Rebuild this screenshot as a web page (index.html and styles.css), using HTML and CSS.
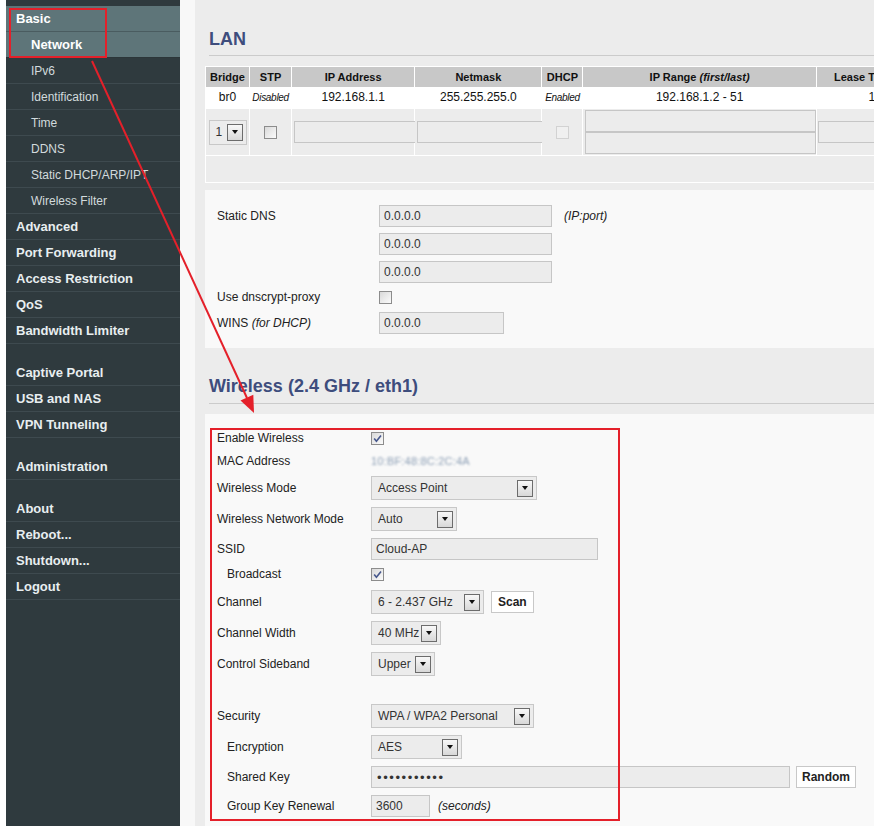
FILE: index.html
```html
<!DOCTYPE html>
<html>
<head>
<meta charset="utf-8">
<title>Basic: Network</title>
<link rel="stylesheet" href="styles.css">
</head>
<body>
<div class="page">
  <div class="edge"></div>
  <nav class="sidebar">
    <a class="item main active">Basic</a>
    <a class="item sub active current">Network</a>
    <a class="item sub">IPv6</a>
    <a class="item sub">Identification</a>
    <a class="item sub">Time</a>
    <a class="item sub">DDNS</a>
    <a class="item sub">Static DHCP/ARP/IPT</a>
    <a class="item sub">Wireless Filter</a>
    <a class="item main">Advanced</a>
    <a class="item main">Port Forwarding</a>
    <a class="item main">Access Restriction</a>
    <a class="item main">QoS</a>
    <a class="item main">Bandwidth Limiter</a>
    <div class="spacer"></div>
    <a class="item main">Captive Portal</a>
    <a class="item main">USB and NAS</a>
    <a class="item main">VPN Tunneling</a>
    <div class="spacer"></div>
    <a class="item main">Administration</a>
    <div class="spacer"></div>
    <a class="item main">About</a>
    <a class="item main">Reboot...</a>
    <a class="item main">Shutdown...</a>
    <a class="item main">Logout</a>
  </nav>
  <div class="gutter"></div>
  <main class="content">
    <h2 class="section-title first">LAN</h2>
    <table class="lan">
      <colgroup>
        <col class="c-bridge"><col class="c-stp"><col class="c-ip"><col class="c-mask"><col class="c-dhcp"><col class="c-range"><col class="c-lease">
      </colgroup>
      <tr class="head">
        <th>Bridge</th><th>STP</th><th>IP Address</th><th>Netmask</th><th>DHCP</th><th>IP Range <i>(first/last)</i></th><th>Lease Time <i>(mins)</i></th>
      </tr>
      <tr class="vals">
        <td>br0</td><td><i class="small">Disabled</i></td><td>192.168.1.1</td><td>255.255.255.0</td><td><i class="small">Enabled</i></td><td>192.168.1.2 - 51</td><td>1440</td>
      </tr>
      <tr class="edit">
        <td class="center"><div class="select w38 h25"><span class="val">1</span><span class="arrow"></span></div></td>
        <td class="center"><span class="check"></span></td>
        <td class="left"><input class="field w123" value=""></td>
        <td class="left"><input class="field w127" value=""></td>
        <td class="center"><span class="check disabled"></span></td>
        <td class="left"><div class="stack"><input class="field w231" value=""><input class="field w231" value=""></div></td>
        <td class="left tight"><input class="field w124" value=""></td>
      </tr>
      <tr class="empty"><td colspan="7"></td></tr>
    </table>

    <div class="box dns">
      <div class="label">Static DNS</div>
      <div class="ctrl"><input class="field w173" value="0.0.0.0"><i class="note">(IP:port)</i></div>
      <div class="label"></div>
      <div class="ctrl"><input class="field w173" value="0.0.0.0"></div>
      <div class="label"></div>
      <div class="ctrl"><input class="field w173" value="0.0.0.0"></div>
      <div class="label">Use dnscrypt-proxy</div>
      <div class="ctrl"><span class="check"></span></div>
      <div class="label">WINS <i>(for DHCP)</i></div>
      <div class="ctrl"><input class="field w125" value="0.0.0.0"></div>
    </div>

    <h2 class="section-title second">Wireless (2.4 GHz / eth1)</h2>
    <div class="box wireless">
      <div class="label">Enable Wireless</div>
      <div class="ctrl"><span class="check"><svg viewBox="0 0 11 11" width="11" height="11"><path d="M2.2 5.6 L4.4 8.2 L9 2.4" fill="none" stroke="#46578c" stroke-width="1.6"/></svg></span></div>

      <div class="label">MAC Address</div>
      <div class="ctrl"><span class="mac">10:BF:48:8C:2C:4A</span></div>

      <div class="label">Wireless Mode</div>
      <div class="ctrl"><div class="select w166"><span class="val">Access Point</span><span class="arrow"></span></div></div>

      <div class="label">Wireless Network Mode</div>
      <div class="ctrl"><div class="select w86"><span class="val">Auto</span><span class="arrow"></span></div></div>

      <div class="label">SSID</div>
      <div class="ctrl"><input class="field w227" value="Cloud-AP"></div>

      <div class="label indent">Broadcast</div>
      <div class="ctrl"><span class="check"><svg viewBox="0 0 11 11" width="11" height="11"><path d="M2.2 5.6 L4.4 8.2 L9 2.4" fill="none" stroke="#46578c" stroke-width="1.6"/></svg></span></div>

      <div class="label">Channel</div>
      <div class="ctrl"><div class="select w113"><span class="val">6 - 2.437 GHz</span><span class="arrow"></span></div><button class="btn scan">Scan</button></div>

      <div class="label">Channel Width</div>
      <div class="ctrl"><div class="select w70"><span class="val">40 MHz</span><span class="arrow"></span></div></div>

      <div class="label">Control Sideband</div>
      <div class="ctrl"><div class="select w64"><span class="val">Upper</span><span class="arrow"></span></div></div>

      <div class="gap-row"></div>

      <div class="label">Security</div>
      <div class="ctrl"><div class="select w163"><span class="val">WPA / WPA2 Personal</span><span class="arrow"></span></div></div>

      <div class="label indent">Encryption</div>
      <div class="ctrl"><div class="select w91"><span class="val">AES</span><span class="arrow"></span></div></div>

      <div class="label indent">Shared Key</div>
      <div class="ctrl"><div class="field pw w419"><span class="dots">•••••••••••</span></div><button class="btn random">Random</button></div>

      <div class="label indent">Group Key Renewal</div>
      <div class="ctrl"><input class="field w59" value="3600"><i class="note near">(seconds)</i></div>
    </div>
  </main>
</div>

<div class="annot annot-nav"></div>
<div class="annot annot-form"></div>
<svg class="annot-arrow" width="874" height="826" viewBox="0 0 874 826">
  <line x1="92" y1="61" x2="247" y2="398" stroke="#e4202a" stroke-width="2"/>
  <polygon points="254,413 240.5,400.5 253.3,394.7" fill="#e4202a"/>
</svg>
</body>
</html>
```

FILE: styles.css
```css
html, body {
  margin: 0;
  padding: 0;
  height: 100%;
  overflow: hidden;
}

body {
  font-family: "Liberation Sans", Arial, sans-serif;
  font-size: 12px;
  color: #222;
  background: #ececec;
  position: relative;
}

.page {
  display: flex;
  height: 826px;
}

.edge {
  width: 6px;
  flex: none;
  background: #ffffff;
}

/* Sidebar */
.sidebar {
  width: 174px;
  flex: none;
  background: #2f3a3e;
  padding-top: 6px;
  display: flex;
  flex-direction: column;
}

.item {
  display: flex;
  align-items: center;
  height: 25px;
  flex: none;
  border-bottom: 1px solid #3e4a4f;
  color: #d2dadd;
  text-decoration: none;
  font-size: 12px;
  white-space: nowrap;
}

.item.main {
  font-weight: bold;
  font-size: 13px;
  padding-left: 10px;
  color: #e8eef0;
}

.item.sub {
  padding-left: 25px;
}

.item.active {
  background: #5e7579;
  border-bottom-color: #4a5c60;
  color: #ffffff;
}

.item.current {
  font-weight: bold;
  font-size: 13px;
  border-bottom-color: #2c3639;
}

.spacer {
  height: 16px;
  flex: none;
}

.gutter {
  width: 15px;
  flex: none;
  background: #f8f8f8;
}

/* Content */
.content {
  flex: 1;
  min-width: 0;
  overflow: hidden;
  padding: 28px 0 0 10px;
}

.section-title {
  margin: 0 0 10px 4px;
  padding-bottom: 6px;
  border-bottom: 1px solid #cbcbcb;
  font-size: 18px;
  line-height: 22px;
  font-weight: bold;
  color: #3e4d7d;
  white-space: nowrap;
}

.section-title.first {
  padding-bottom: 5px;
}

.section-title.second {
  margin-top: 27px;
}

/* LAN table */
.lan {
  border-spacing: 1px;
  background: #ffffff;
  table-layout: fixed;
  width: 743px;
  font-family: "Liberation Sans", Arial, sans-serif;
}

.c-bridge { width: 43px; }
.c-stp { width: 41px; }
.c-ip { width: 122px; }
.c-mask { width: 126px; }
.c-dhcp { width: 40px; }
.c-range { width: 232px; }
.c-lease { width: 130px; }

.lan th {
  background: #c8c8c8;
  height: 19px;
  padding: 0 0 1px;
  font-size: 11px;
  font-weight: bold;
  color: #111;
  text-align: center;
  white-space: nowrap;
  overflow: hidden;
}

.lan .vals td {
  background: #ffffff;
  height: 17px;
  padding: 0 0 3px;
  text-align: center;
  font-size: 12px;
  color: #111;
  white-space: nowrap;
}

.lan .small {
  font-size: 10px;
  letter-spacing: -0.3px;
}

.lan .edit td {
  background: #ececec;
  height: 46px;
  padding: 0;
  vertical-align: middle;
}

.lan .edit td.center {
  text-align: center;
}

.lan .edit td.left {
  text-align: left;
  padding-left: 2px;
}

.lan .edit td.tight {
  padding-left: 1px;
}

.lan .empty td {
  background: #ececec;
  height: 26px;
  padding: 0;
}

.stack {
  display: flex;
  flex-direction: column;
}

/* Boxes */
.box {
  background: #f9f9f9;
  display: grid;
  align-items: center;
}

.dns {
  margin-top: 7px;
  padding: 12px 0 10px 12px;
  grid-template-columns: 162px 1fr;
  grid-template-rows: 28px 28px 28px 22px 30px;
}

.wireless {
  margin-top: 1px;
  padding: 13px 0 20px 12px;
  grid-template-columns: 154px 1fr;
  grid-template-rows: 22px 24px 30px 32px 28px 22px 34px 28px 34px 20px 30px 32px 28px 30px;
}

.label {
  color: #222;
  white-space: nowrap;
}

.label.indent {
  padding-left: 10px;
}

.ctrl {
  display: flex;
  align-items: center;
}

.gap-row {
  grid-column: 1 / -1;
}

.note {
  margin-left: 12px;
  color: #222;
}

.note.near {
  margin-left: 8px;
}

/* Form controls */
.field {
  box-sizing: border-box;
  height: 22px;
  margin: 0;
  border: 1px solid #c6c6c6;
  background: #ececec;
  padding: 0 4px;
  font-family: "Liberation Sans", Arial, sans-serif;
  font-size: 12px;
  color: #333;
  outline: none;
  display: block;
}

.pw {
  display: flex;
  align-items: center;
}

.dots {
  font-size: 13px;
  letter-spacing: 1.6px;
  color: #333;
  padding-left: 1px;
}

.w59 { width: 59px; }
.w123 { width: 123px; }
.w124 { width: 124px; }
.w125 { width: 125px; }
.w127 { width: 127px; }
.w173 { width: 173px; }
.w227 { width: 227px; }
.w231 { width: 231px; }
.w419 { width: 419px; }

.select {
  box-sizing: border-box;
  display: inline-flex;
  align-items: center;
  height: 24px;
  border: 1px solid #c8c8c8;
  background: #ececec;
  padding: 0 3px 0 6px;
  color: #333;
  white-space: nowrap;
  text-align: left;
}

.select .val {
  flex: 1;
}

.select .arrow {
  box-sizing: border-box;
  width: 16px;
  height: 17px;
  border: 1px solid #6c6c6c;
  background: linear-gradient(#f8f8f8, #d8d8d8);
  display: flex;
  align-items: center;
  justify-content: center;
  flex: none;
}

.select .arrow::after {
  content: "";
  border-left: 3.5px solid transparent;
  border-right: 3.5px solid transparent;
  border-top: 4px solid #111;
}

.select.h25 { height: 25px; }
.w38 { width: 38px; }
.w64 { width: 64px; }
.w70 { width: 70px; }
.w86 { width: 86px; }
.w91 { width: 91px; }
.w113 { width: 113px; }
.w163 { width: 163px; }
.w166 { width: 166px; }

.check {
  box-sizing: border-box;
  display: inline-flex;
  align-items: center;
  justify-content: center;
  width: 13px;
  height: 13px;
  border: 1px solid #8c8c8c;
  background: linear-gradient(135deg, #d9d9d9, #fbfbfb);
  vertical-align: middle;
}

.check.disabled {
  border-color: #d2d2d2;
  background: #f0f0f0;
}

.mac {
  font-size: 11px;
  color: #8ea0b6;
  filter: blur(0.8px);
  letter-spacing: 0.2px;
}

.btn {
  box-sizing: border-box;
  height: 22px;
  margin: 0;
  border: 1px solid #c8c8c8;
  background: #ffffff;
  font-family: "Liberation Sans", Arial, sans-serif;
  font-size: 12px;
  font-weight: bold;
  color: #222;
}

.btn.scan {
  margin-left: 7px;
  padding: 0 6px;
}

.btn.random {
  margin-left: 6px;
  padding: 0 5px;
}

/* Annotations (overlay) */
.annot {
  position: absolute;
  box-sizing: border-box;
  border: 2px solid #e4202a;
  pointer-events: none;
}

.annot-nav {
  left: 9px;
  top: 8px;
  width: 98px;
  height: 50px;
}

.annot-form {
  left: 210px;
  top: 428px;
  width: 410px;
  height: 393px;
}

.annot-arrow {
  position: absolute;
  left: 0;
  top: 0;
  pointer-events: none;
}
```
